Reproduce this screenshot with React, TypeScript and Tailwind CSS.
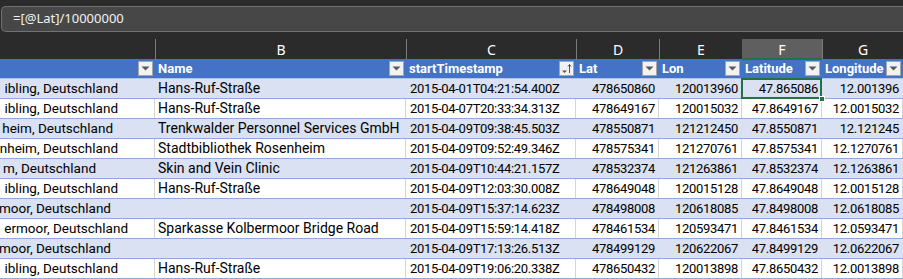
import { ReactNode } from "react"

type Row = {
    a: string
    aPad: string
    b: string
    c: string
    d: string
    e: string
    f: string
    g: string
}

const rows: Row[] = [
    { a: "ibling, Deutschland", aPad: "pr-[36px]", b: "Hans-Ruf-Straße", c: "2015-04-01T04:21:54.400Z", d: "478650860", e: "120013960", f: "47.865086", g: "12.001396" },
    { a: "ibling, Deutschland", aPad: "pr-[36px]", b: "Hans-Ruf-Straße", c: "2015-04-07T20:33:34.313Z", d: "478649167", e: "120015032", f: "47.8649167", g: "12.0015032" },
    { a: "heim, Deutschland", aPad: "pr-[41px]", b: "Trenkwalder Personnel Services GmbH", c: "2015-04-09T09:38:45.503Z", d: "478550871", e: "121212450", f: "47.8550871", g: "12.121245" },
    { a: "nheim, Deutschland", aPad: "pr-[36px]", b: "Stadtbibliothek Rosenheim", c: "2015-04-09T09:52:49.346Z", d: "478575341", e: "121270761", f: "47.8575341", g: "12.1270761" },
    { a: "m, Deutschland", aPad: "pr-[58px]", b: "Skin and Vein Clinic", c: "2015-04-09T10:44:21.157Z", d: "478532374", e: "121263861", f: "47.8532374", g: "12.1263861" },
    { a: "ibling, Deutschland", aPad: "pr-[36px]", b: "Hans-Ruf-Straße", c: "2015-04-09T12:03:30.008Z", d: "478649048", e: "120015128", f: "47.8649048", g: "12.0015128" },
    { a: "moor, Deutschland", aPad: "pr-[43px]", b: "", c: "2015-04-09T15:37:14.623Z", d: "478498008", e: "120618085", f: "47.8498008", g: "12.0618085" },
    { a: "ermoor, Deutschland", aPad: "pr-[26px]", b: "Sparkasse Kolbermoor Bridge Road", c: "2015-04-09T15:59:14.418Z", d: "478461534", e: "120593471", f: "47.8461534", g: "12.0593471" },
    { a: "moor, Deutschland", aPad: "pr-[43px]", b: "", c: "2015-04-09T17:13:26.513Z", d: "478499129", e: "120622067", f: "47.8499129", g: "12.0622067" },
    { a: "ibling, Deutschland", aPad: "pr-[36px]", b: "Hans-Ruf-Straße", c: "2015-04-09T19:06:20.338Z", d: "478650432", e: "120013898", f: "47.8650432", g: "12.0013898" },
]

const cols = "grid grid-cols-[155px_251px_170px_83px_83px_80px_81px]"

const FilterButton = ({ sorted }: { sorted?: boolean }) => (
    <div className="w-[15px] h-[15px] shrink-0 bg-[#f2f2f2] border border-[#a6a6a6] flex items-center justify-center">
        {sorted ? (
            <svg width="13" height="13" viewBox="0 0 13 13">
                <path d="M2 8.5 L7 8.5 L4.5 11 Z" fill="#555" />
                <path d="M9.5 11 L9.5 2.5 M8 4.5 L9.5 2.5 L11 4.5" stroke="#555" strokeWidth="1" fill="none" />
            </svg>
        ) : (
            <svg width="9" height="5" viewBox="0 0 9 5">
                <path d="M0.5 0.5 L8.5 0.5 L4.5 4.5 Z" fill="#595959" />
            </svg>
        )}
    </div>
)

const HeaderCell = ({ title, sorted }: { title: string, sorted?: boolean }) => (
    <div className="flex items-center h-[19px] pl-[3px] pr-[2px] gap-[1px]">
        <span className="flex-1 overflow-hidden whitespace-nowrap font-bold text-white text-[13px]">{title}</span>
        <FilterButton sorted={sorted} />
    </div>
)

const sizes = {
    num: "text-[13px] tracking-[-0.3px]",
    text: "text-[14px]",
    clip: "text-[13.5px]",
}

const Cell = ({ children, className, band, kind = "text" }: { children?: ReactNode, className?: string, band: boolean, kind?: keyof typeof sizes }) => (
    <div className={`relative h-[19px] flex items-center overflow-hidden whitespace-nowrap text-black border-r ${sizes[kind]} ${band ? "border-[#d9e1f2]" : "border-[#d4d4d4]"} ${className ?? ""}`}>
        {children}
    </div>
)

const App = () => {
    return (
        <div className="w-[903px] h-[279px] overflow-hidden bg-white font-['Roboto',Arial,sans-serif]">

            <div className="h-[39px] bg-[#2b2b2b] pt-[6px]">
                <div className="ml-px h-[26px] rounded-l-[5px] border border-r-0 border-[#727272] bg-[#474747] flex items-center pl-[11px] font-['Noto_Sans',sans-serif] text-[13px] text-[#f2f2f2]">
                    =[@Lat]/10000000
                </div>
            </div>

            <div className={`${cols} h-[20px] bg-[#2b2b2b] text-[14px] text-white font-['Noto_Sans',sans-serif]`}>
                <div />
                {["B", "C", "D", "E"].map((l) => (
                    <div key={l} className="border-l border-[#7a7a7a] flex items-center justify-center">{l}</div>
                ))}
                <div className="bg-[#5f5f5f] shadow-[inset_0_-2px_0_#217346] flex items-center justify-center">F</div>
                <div className="border-l border-[#7a7a7a] flex items-center justify-center">G</div>
            </div>

            <div className={`${cols} bg-[#4472c4] border-b border-[#b4c6e7]`}>
                <HeaderCell title="" />
                <HeaderCell title="Name" />
                <HeaderCell title="startTimestamp" sorted />
                <HeaderCell title="Lat" />
                <HeaderCell title="Lon" />
                <HeaderCell title="Latitude" />
                <HeaderCell title="Longitude" />
            </div>

            {rows.map((r, i) => {
                const band = i % 2 === 0
                return (
                    <div key={i} className={`${cols} border-b border-[#8ea9db] ${band ? "bg-[#d9e1f2]" : "bg-white"}`}>
                        <Cell band={band} kind="clip" className={`justify-end ${r.aPad}`}>{r.a}</Cell>
                        <Cell band={band} className="pl-[3px]">{r.b}</Cell>
                        <Cell band={band} kind="num" className="pl-[4px]">{r.c}</Cell>
                        <Cell band={band} kind="num" className="justify-end pr-[3px]">{r.d}</Cell>
                        <Cell band={band} kind="num" className="justify-end pr-[3px]">{r.e}</Cell>
                        <Cell band={band} kind="num" className={`justify-end pr-[3px] ${i === 0 ? "overflow-visible z-10" : ""}`}>
                            {r.f}
                            {i === 0 && (
                                <>
                                    <div className="absolute -left-px -top-[1px] -right-[1px] -bottom-[1px] border-2 border-[#217346]" />
                                    <div className="absolute -right-[4px] -bottom-[4px] w-[6px] h-[6px] bg-[#217346] border border-white" />
                                </>
                            )}
                        </Cell>
                        <Cell band={band} kind="num" className="justify-end pr-[3px]">{r.g}</Cell>
                    </div>
                )
            })}

        </div>
    )
}

export default App
